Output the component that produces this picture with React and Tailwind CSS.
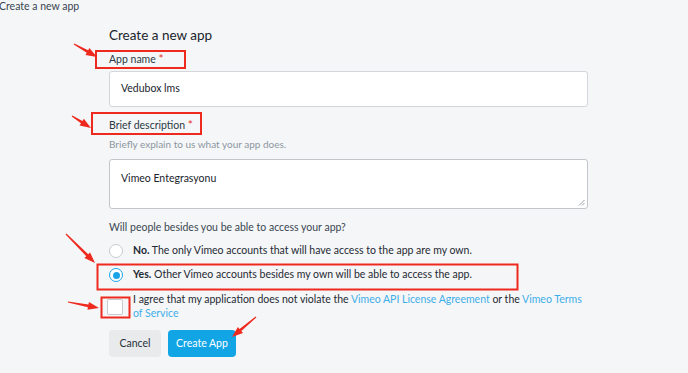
import React from "react";

function Arrow({ x1, y1, x2, y2 }) {
  const dx = x2 - x1;
  const dy = y2 - y1;
  const len = Math.sqrt(dx * dx + dy * dy);
  const ux = dx / len;
  const uy = dy / len;
  const px = -uy;
  const py = ux;
  const hl = 11;
  const hw = 4;
  const bx = x2 - ux * hl;
  const by = y2 - uy * hl;
  const pts = [
    [x1 + px * 0.6, y1 + py * 0.6],
    [bx + px * 1.4, by + py * 1.4],
    [bx + px * hw, by + py * hw],
    [x2, y2],
    [bx - px * hw, by - py * hw],
    [bx - px * 1.4, by - py * 1.4],
    [x1 - px * 0.6, y1 - py * 0.6],
  ]
    .map((p) => p.join(","))
    .join(" ");
  return <polygon points={pts} fill="#ee2a1f" />;
}

function Annotations() {
  return (
    <svg
      className="pointer-events-none absolute left-0 top-0"
      width="688"
      height="373"
      viewBox="0 0 688 373"
    >
      <rect x="96" y="51" width="89" height="17" fill="none" stroke="#ee2a1f" strokeWidth="2" />
      <rect x="92" y="113" width="109" height="21" fill="none" stroke="#ee2a1f" strokeWidth="2" />
      <rect x="97.5" y="264.5" width="420" height="25" fill="none" stroke="#ee2a1f" strokeWidth="2" />
      <rect x="101.5" y="297.5" width="28" height="20" fill="none" stroke="#ee2a1f" strokeWidth="2" />
      <Arrow x1={74} y1={44} x2={97} y2={57} />
      <Arrow x1={72} y1={116} x2={91} y2={128} />
      <Arrow x1={66} y1={234} x2={95} y2={263} />
      <Arrow x1={68} y1={302} x2={99} y2={308} />
      <Arrow x1={256} y1={317} x2={232} y2={337} />
    </svg>
  );
}

export default function App() {
  return (
    <div
      className="relative h-[373px] w-[688px] overflow-hidden bg-[#f5f6f8] text-[#1f2a33]"
      style={{ fontFamily: "Lato, 'Noto Sans', sans-serif" }}
    >
      <div className="ml-[-1px] text-[10.5px] leading-[13px] text-[#3a4550]">Create a new app</div>

      <div className="ml-[109px] w-[479px]">
        <h1 className="mt-[12px] text-[13.5px] leading-[20px] text-[#1a242c]">Create a new app</h1>

        <div className="mt-[5px] text-[10.5px] leading-[18px] text-[#2c3943]">
          App name <span className="text-[12px] text-[#e8322a]">*</span>
        </div>
        <div className="mt-[3px] flex h-[36px] items-center rounded-[3px] border border-[#d3d6da] bg-white px-[11px] text-[10.5px] text-[#1a242c]">
          Vedubox lms
        </div>

        <div className="mt-[9px] text-[10.5px] leading-[18px] text-[#2c3943]">
          Brief description <span className="text-[12px] text-[#e8322a]">*</span>
        </div>
        <div className="mt-[2px] text-[10px] leading-[16px] text-[#8c969f]">
          Briefly explain to us what your app does.
        </div>
        <div className="relative mt-[7px] h-[50px] rounded-[3px] border border-[#c3c7cc] bg-white px-[11px] pt-[10px] text-[10.5px] leading-[16px] text-[#1a242c]">
          Vimeo Entegrasyonu
          <svg className="absolute bottom-[2px] right-[2px]" width="7" height="7" viewBox="0 0 7 7">
            <path d="M6.5 1 L1 6.5 M6.5 4 L4 6.5" stroke="#9aa0a6" strokeWidth="1" />
          </svg>
        </div>

        <div className="mt-[10px] text-[10.5px] leading-[16px] text-[#3a4752]">
          Will people besides you be able to access your app?
        </div>

        <div className="mt-[6px] flex h-[20px] items-center text-[10.5px] text-[#1f2a33]">
          <span className="h-[14px] w-[14px] rounded-full border border-[#c7cbd0] bg-white" />
          <span className="ml-[10px]">
            <b className="font-bold">No.</b> The only Vimeo accounts that will have access to the app are my own.
          </span>
        </div>

        <div className="mt-[4px] flex h-[20px] items-center text-[10.5px] text-[#1f2a33]">
          <span className="flex h-[14px] w-[14px] items-center justify-center rounded-full border-[1.5px] border-[#1ba3e8] bg-white">
            <span className="h-[7px] w-[7px] rounded-full bg-[#1ba3e8]" />
          </span>
          <span className="ml-[10px]">
            <b className="font-bold">Yes.</b> Other Vimeo accounts besides my own will be able to access the app.
          </span>
        </div>

        <div className="ml-[-2px] mt-[7px] flex text-[10.5px] leading-[14px] text-[#1f2a33]">
          <span className="mt-[7px] h-[16px] w-[16px] shrink-0 rounded-[2px] border border-[#c7cbd0] bg-white" />
          <p className="ml-[10px]">
            I agree that my application does not violate the{" "}
            <a className="text-[#3eaee8]">Vimeo API License Agreement</a> or the{" "}
            <a className="text-[#3eaee8]">
              Vimeo Terms
              <br />
              of Service
            </a>
          </p>
        </div>

        <div className="mt-[10px] flex gap-[7px]">
          <button className="h-[27px] w-[52px] rounded-[4px] bg-[#e9eaec] text-[10.5px] text-[#26323b]">
            Cancel
          </button>
          <button className="h-[27px] w-[68px] rounded-[4px] bg-[#12a5e6] text-[10.5px] text-white">
            Create App
          </button>
        </div>
      </div>

      <Annotations />
    </div>
  );
}
